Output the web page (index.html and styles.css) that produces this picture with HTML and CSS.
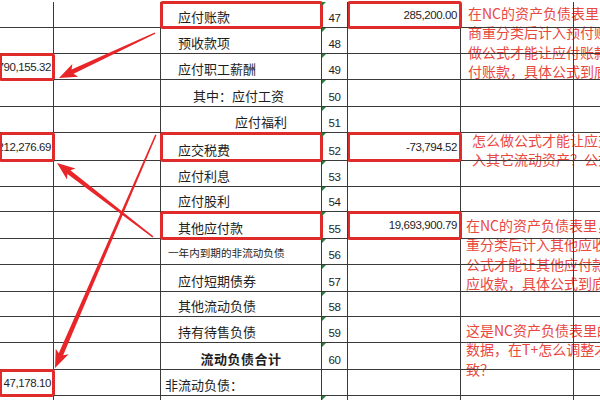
FILE: index.html
```html
<!DOCTYPE html>
<html lang="zh">
<head>
<meta charset="utf-8">
<title>负债表</title>
<link rel="stylesheet" href="styles.css">
</head>
<body>
<div class="sheet">
  <!-- 47 -->
  <div class="c"></div><div class="c"></div>
  <div class="c lbl hl">应付账款</div>
  <div class="c num rn tri">47</div>
  <div class="c num amt hl">285,200.00</div>
  <div class="c note-cell"><div class="note n1">在NC的资产负债表里，应付账款中的供应<br>商重分类后计入预付账款，在T+中怎么<br>做公式才能让应付账款借方余额计入预<br>付账款，具体公式到底怎么写？</div></div>
  <div class="c"></div>
  <!-- 48 -->
  <div class="c"></div><div class="c"></div>
  <div class="c lbl">预收款项</div>
  <div class="c num rn tri">48</div>
  <div class="c num amt"></div><div class="c"></div><div class="c"></div>
  <!-- 49 -->
  <div class="c num amt amt1 hl">1,790,155.32</div><div class="c"></div>
  <div class="c lbl">应付职工薪酬</div>
  <div class="c num rn tri">49</div>
  <div class="c num amt"></div><div class="c"></div><div class="c"></div>
  <!-- 50 -->
  <div class="c"></div><div class="c"></div>
  <div class="c lbl i2">其中：应付工资</div>
  <div class="c num rn tri">50</div>
  <div class="c num amt"></div><div class="c"></div><div class="c"></div>
  <!-- 51 -->
  <div class="c"></div><div class="c"></div>
  <div class="c lbl i3">应付福利</div>
  <div class="c num rn tri">51</div>
  <div class="c num amt"></div><div class="c"></div><div class="c"></div>
  <!-- 52 -->
  <div class="c num amt amt1 hl">1,212,276.69</div><div class="c"></div>
  <div class="c lbl hl">应交税费</div>
  <div class="c num rn tri">52</div>
  <div class="c num amt hl">-73,794.52</div>
  <div class="c note-cell"><div class="note n2">怎么做公式才能让应交税费借方余额计<br>入其它流动资产？公式怎么写？</div></div>
  <div class="c"></div>
  <!-- 53 -->
  <div class="c"></div><div class="c"></div>
  <div class="c lbl">应付利息</div>
  <div class="c num rn tri">53</div>
  <div class="c num amt"></div><div class="c"></div><div class="c"></div>
  <!-- 54 -->
  <div class="c"></div><div class="c"></div>
  <div class="c lbl">应付股利</div>
  <div class="c num rn tri">54</div>
  <div class="c num amt"></div><div class="c"></div><div class="c"></div>
  <!-- 55 -->
  <div class="c"></div><div class="c"></div>
  <div class="c lbl hl">其他应付款</div>
  <div class="c num rn tri">55</div>
  <div class="c num amt hl">19,693,900.79</div>
  <div class="c note-cell"><div class="note n3">在NC的资产负债表里，其他应付款中的<br>重分类后计入其他应收款，在T+中怎么做<br>公式才能让其他应付款借方余额计入其他<br>应收款，具体公式到底怎么写？</div></div>
  <div class="c"></div>
  <!-- 56 -->
  <div class="c"></div><div class="c"></div>
  <div class="c lbl small">一年内到期的非流动负债</div>
  <div class="c num rn tri">56</div>
  <div class="c num amt"></div><div class="c"></div><div class="c"></div>
  <!-- 57 -->
  <div class="c"></div><div class="c"></div>
  <div class="c lbl">应付短期债券</div>
  <div class="c num rn tri">57</div>
  <div class="c num amt"></div><div class="c"></div><div class="c"></div>
  <!-- 58 -->
  <div class="c"></div><div class="c"></div>
  <div class="c lbl">其他流动负债</div>
  <div class="c num rn tri">58</div>
  <div class="c num amt"></div><div class="c"></div><div class="c"></div>
  <!-- 59 -->
  <div class="c"></div><div class="c"></div>
  <div class="c lbl">持有待售负债</div>
  <div class="c num rn tri">59</div>
  <div class="c num amt"></div>
  <div class="c note-cell"><div class="note n4">这是NC资产负债表里的数据，和T+的<br>数据，在T+怎么调整才能一<br>致？</div></div>
  <div class="c"></div>
  <!-- 60 -->
  <div class="c"></div><div class="c"></div>
  <div class="c lbl total">流动负债合计</div>
  <div class="c num rn tri">60</div>
  <div class="c num amt"></div><div class="c"></div><div class="c"></div>
  <!-- 61 -->
  <div class="c num amt amt1 hl">47,178.10</div><div class="c"></div>
  <div class="c lbl i0">非流动负债：</div>
  <div class="c num rn"></div>
  <div class="c num amt"></div><div class="c"></div><div class="c"></div>
  <!-- 62 -->
  <div class="c"></div><div class="c"></div>
  <div class="c lbl"></div>
  <div class="c num rn tri"></div>
  <div class="c num amt"></div><div class="c"></div><div class="c"></div>
</div>

<svg class="arrows" width="600" height="400" viewBox="0 0 600 400" aria-hidden="true">
  <g fill="#e8262a">
    <polygon transform="translate(59,78) rotate(154.9)" points="0,0 -18,-7 -15,-2.4 -106,-0.7 -106,0.7 -15,2.4 -18,7"/>
    <polygon transform="translate(57,163) rotate(-142.4)" points="0,0 -18,-7 -15,-2.4 -121,-0.7 -121,0.7 -15,2.4 -18,7"/>
    <polygon transform="translate(55,368) rotate(113.4)" points="0,0 -18,-7 -15,-2.4 -254,-0.7 -254,0.7 -15,2.4 -18,7"/>
  </g>
</svg>
</body>
</html>
```

FILE: styles.css
```css
html {
  margin: 0;
  padding: 0;
  background: #fff;
}

body {
  margin: 0;
  padding: 0;
  width: 600px;
  height: 400px;
  overflow: hidden;
  position: relative;
  font-family: "Noto Sans CJK SC", "Noto Sans", sans-serif;
  color: #1e1e1e;
}

.sheet {
  margin-top: 2px;
  display: grid;
  grid-template-columns: 54px 107px 161px 26px 113px 113px 60px;
  grid-template-rows: 26px 26px 26px 27px 26px 28px 26px 25px 27px 26px 27px 25px 26px 27px 26px 26px;
}

.c {
  box-sizing: border-box;
  border-right: 1px solid #3a3a3a;
  border-bottom: 1px solid #3a3a3a;
  display: flex;
  min-width: 0;
}

.lbl {
  align-items: flex-end;
  padding: 0 0 3px 17px;
  font-size: 13px;
  line-height: 15px;
  white-space: nowrap;
}

.lbl.i0 { padding-left: 4px; }
.lbl.i2 { padding-left: 32px; }
.lbl.i3 { padding-left: 74px; }

.lbl.small {
  padding-left: 7px;
  font-size: 10.6px;
  padding-bottom: 4px;
}

.lbl.total {
  padding-left: 0;
  justify-content: center;
  font-weight: bold;
  letter-spacing: 0.5px;
}

.num {
  font-family: "Liberation Sans", Arial, sans-serif;
  font-size: 11.5px;
  letter-spacing: -0.4px;
  white-space: nowrap;
}

.rn {
  position: relative;
  justify-content: center;
  align-items: flex-end;
  padding-bottom: 3px;
  line-height: 12px;
}

.rn.tri::before {
  content: "";
  position: absolute;
  left: 0;
  top: 0;
  border-top: 4px solid #2f7d3b;
  border-right: 4px solid transparent;
}

.amt {
  justify-content: flex-end;
  align-items: center;
  padding-right: 3px;
}

.amt.amt1 {
  padding-right: 2px;
}

.hl {
  outline: 3px solid #e02b2b;
  outline-offset: -2px;
  border-radius: 2px;
}

.note-cell {
  position: relative;
}

.note {
  position: absolute;
  z-index: -1;
  white-space: nowrap;
  font-size: 14px;
  line-height: 19.4px;
  color: #e8483e;
}

.n1 { left: 7px; top: 2px; }
.n2 { left: 11px; top: -2px; }
.n3 { left: 5px; top: 4px; }
.n4 { left: 5px; top: 4px; }

.arrows {
  position: absolute;
  left: 0;
  top: 0;
  z-index: 2;
  pointer-events: none;
}
```
